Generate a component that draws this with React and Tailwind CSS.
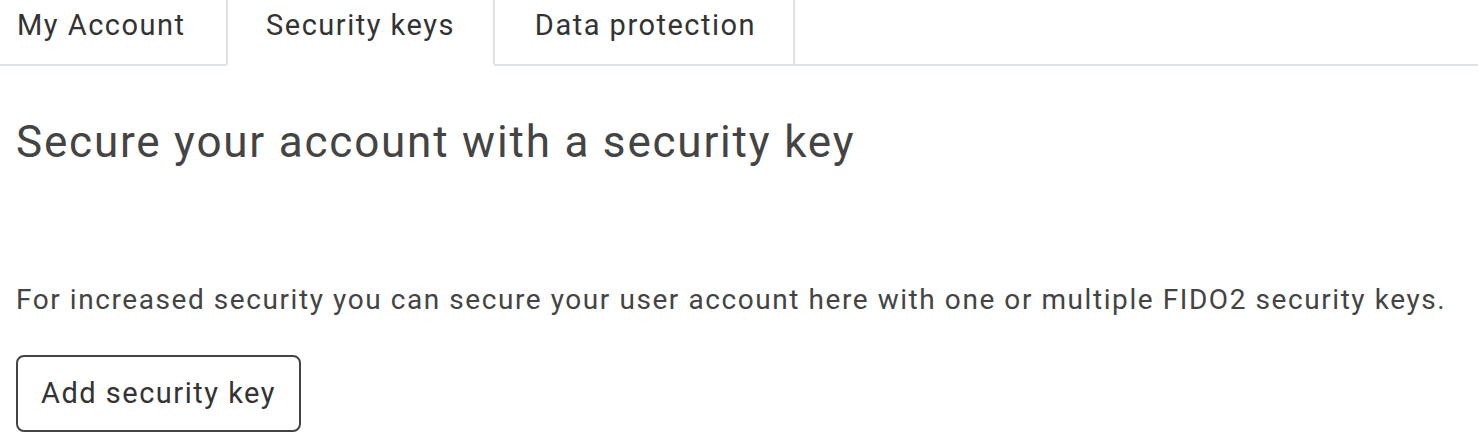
export default function App() {
  return (
    <div className="w-[1478px] h-[447px] overflow-hidden bg-white text-[#333] tracking-[1.5px]" style={{ fontFamily: 'Roboto, "Liberation Sans", sans-serif' }}>
      <div className="flex h-[66px] border-b-2 border-[#dee2e6]">
        <div className="flex items-start pl-[17px] w-[226px] pt-[5px] text-[29px] leading-[40px] -mb-[2px] border-b-2 border-[#dee2e6]">
          My Account
        </div>
        <div className="flex items-start justify-center w-[269px] pt-[5px] text-[29px] leading-[40px] border-x-2 border-[#dee2e6] bg-white -mb-[2px] border-b-2 border-b-white">
          Security keys
        </div>
        <div className="flex items-start justify-center w-[300px] pt-[5px] pl-[3px] text-[29px] leading-[40px] border-r-2 border-[#dee2e6]">
          Data protection
        </div>
      </div>
      <div className="pl-[16px]">
        <h1 className="mt-[48px] text-[44px] leading-[56px] tracking-[1.8px] text-[#444]">Secure your account with a security key</h1>
        <p className="mt-[112px] text-[28px] leading-[36px] tracking-[1.57px] text-[#444]">For increased security you can secure your user account here with one or multiple FIDO2 security keys.</p>
        <button className="mt-[37px] w-[285px] h-[77px] border-2 border-[#444] rounded-[8px] text-[29px] text-[#333] flex items-center justify-center">
          Add security key
        </button>
      </div>
    </div>
  );
}
